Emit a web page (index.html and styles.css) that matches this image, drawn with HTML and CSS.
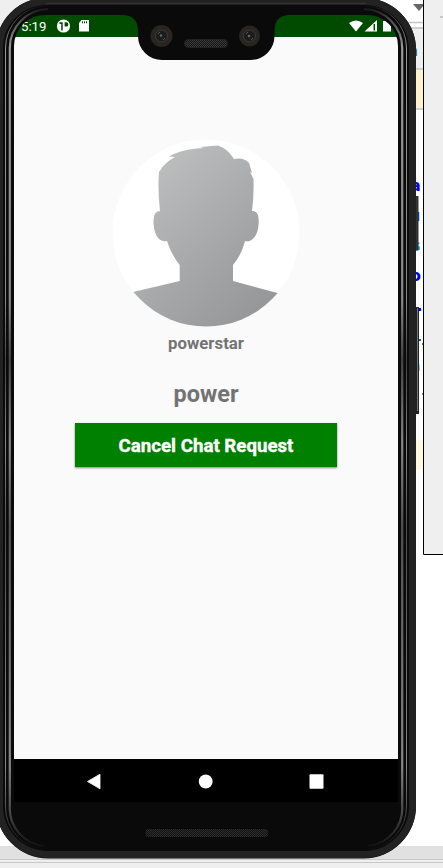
FILE: index.html
```
<!DOCTYPE html>
<html lang="en">
<head>
<meta charset="utf-8">
<title>Chat request</title>
<link rel="stylesheet" href="styles.css">
</head>
<body>
<svg class="desktop" viewBox="0 0 443 868" aria-hidden="true">
  <rect width="443" height="868" fill="#fff"/>
  <rect width="60" height="60" fill="#efefef"/>
  <rect x="350" y="27" width="74" height="42" fill="#efefef"/>
  <path d="M350 22.500h74M350 28h74M412 69h12M412 109h12" stroke="#c4c4c8" stroke-width="1.500"/>
  <path d="M413 4h12l-6 7z" fill="#666"/>
  <path d="M412 70h12v38h-12z" fill="#fff3cf"/>
  <path d="M412 440h12v30h-12z" fill="#fff8e1"/>
  <rect y="846" width="443" height="22" fill="#efefef"/>
  <rect y="846" width="443" height="13" fill="#e1e1e1"/>
  <path d="M0 859.500h443M0 862.500h443" stroke="#c8c8c8"/>
  <g class="code">
    <text x="406.500" y="56" fill="#0645ad">n</text>
    <text x="410" y="191">a</text><text x="409" y="221" fill="#0033dd">u</text>
    <text x="411" y="251" fill="#16a0c8">s</text><text x="410" y="281">o</text>
    <text x="405" y="311">d.</text><text x="409" y="371" fill="#0033ff">n</text>
  </g>
  <path d="M419 339h2v2h-2z" fill="#077"/><path d="M422 343h1v2h-1zM422 393h1v2h-1z" fill="#8a8a00"/>
  <path d="M423.500-1h30v555.500h-30z" fill="#efefef" stroke="#000"/>
  <path d="M440 17h3" stroke="#b5bcc4" stroke-width="1.500"/>
</svg>
<main class="screen">
  <header class="status">
    <span>5:19</span>
    <svg class="left-icons" width="36" height="16" viewBox="0 0 36 16"><circle cx="7.500" cy="8" r="6.600" fill="#fff"/><path d="M3.500 4.200h3.200v8.400H5.200V6H3.500zM8.600 4.200h1.500a2.200 2.200 0 0 1 0 4.400H8.600z" fill="#004b00"/><path d="M25.500 2h7.500v11.500H23V5z" fill="#fff"/><path d="M26.500 3.300v2M28.500 3.300v2M30.500 3.300v2" stroke="#004b00"/></svg>
    <svg class="right-icons" width="44" height="16" viewBox="0 0 44 16"><path d="M0 5Q7-.2 14 5L7 13.500z" fill="#fff"/><path d="M28 2v11.500H15.500z" fill="#fff"/><path d="M25.300 6v6.500" stroke="#004b00" stroke-width="1.500"/><path d="M34 3h2V2h4v1h2v10.500h-8z" fill="#fff"/></svg>
  </header>
  <section class="profile">
    <svg class="avatar" viewBox="0 0 188 188"><defs><linearGradient id="skin" x1="0" y1="0" x2="1" y2="1"><stop offset=".1" stop-color="#c1c1c1"/><stop offset=".55" stop-color="#a5a7a9"/><stop offset="1" stop-color="#8e8f91"/></linearGradient><clipPath id="disc"><circle cx="94" cy="94" r="93.500"/></clipPath></defs><circle cx="94" cy="94" r="93.500" fill="#fff"/><path clip-path="url(#disc)" fill="url(#skin)" d="M0 158L67.700 142V126Q59 115 55 102C45 104 41 92 41.500 81Q42 72 48 72Q45.500 51 47 33Q53 23 63 18L57 17.500Q68 11 85 9.500L92 9L88 8L106 6.500Q116 10 122 20Q132 18 137 24L140 34L138 33L141.500 40Q142 57 140 72C147 72 147 79 146.500 86C146 96 140 104 133 102Q130 115 121 126V142L188 160V188H0z"/></svg>
    <h1>powerstar</h1>
    <p>power</p>
    <button>Cancel Chat Request</button>
  </section>
  <nav>
    <svg viewBox="0 0 384 43"><path d="M73.500 22.500L86 15.200V29.800z" fill="#fff" stroke="#fff" stroke-linejoin="round" stroke-width=".8"/><circle cx="191.700" cy="22.500" r="6.900" fill="#fff"/><rect x="295.500" y="15.300" width="14" height="14.400" rx="1" fill="#fff"/></svg>
  </nav>
</main>
<svg class="frame" viewBox="0 0 443 868" aria-hidden="true">
  <defs>
    <pattern id="mesh" width="2" height="2" patternUnits="userSpaceOnUse"><rect width="2" height="2" fill="#151515"/><path d="M0 0h1v1H0zM1 1h1v1H1z" fill="#3c3c3c"/></pattern>
    <linearGradient id="edge" gradientUnits="userSpaceOnUse" x1="0" y1="5" x2="0" y2="850"><stop stop-color="#0a0a0a"/><stop offset=".015" stop-color="#444"/><stop offset=".05" stop-color="#999"/><stop offset=".35" stop-color="#888"/><stop offset=".42" stop-color="#444"/><stop offset=".52" stop-color="#888"/><stop offset=".62" stop-color="#505050"/><stop offset=".9" stop-color="#888"/><stop offset=".96" stop-color="#444"/><stop offset="1" stop-color="#0a0a0a"/></linearGradient>
  </defs>
  <path d="M414 196h4.500v54h-4.500z" fill="#333"/><path d="M414 307h5v107h-5z" fill="#222"/><path d="M417.500 308v103" stroke="#777"/>
  <path fill="#0a0a0a" fill-rule="evenodd" d="M46-2H364A52 52 0 0 1 416 50V806A52 52.500 0 0 1 364 858.500H48A52 52.500 0 0 1-4 806V48A50 50 0 0 1 46-2zM14 59V46A31 31 0 0 1 45 15H122Q138 15 138 31V36A24 24 0 0 0 162 60H250.500A24 24 0 0 0 274.500 36V31Q274.500 15 290 15H367A31 31 0 0 1 398 46V802H14z"/>
  <path d="M45 1.500H364A48.500 48.500 0 0 1 412.500 50V806A48.500 48.500 0 0 1 364 854.500H48A48.500 48.500 0 0 1-.5 806V48A46.500 46.500 0 0 1 45 1.500z" fill="none" stroke="#222" stroke-width="7"/>
  <path d="M46 3.300H366" stroke="#383838"/>
  <path d="M46 6A41 42 0 0 0 5.500 48V806A43 43 0 0 0 48 850M366 6A41 42 0 0 1 406.500 48V806A43 43 0 0 1 364 850" fill="none" stroke="url(#edge)"/>
  <path d="M48 9A39 39 0 0 0 9.800 48V806A38 38 0 0 0 44 846M364 9A39 39 0 0 1 402.200 48V806A38 38 0 0 1 368 846" fill="none" stroke="url(#edge)" stroke-width="2.200"/>
  <rect x="184.500" y="39.500" width="43" height="8" rx="4" fill="url(#mesh)" stroke="#222"/>
  <g fill="#2b2520"><circle cx="161.500" cy="36" r="11"/><circle cx="249.500" cy="36" r="10.500"/></g>
  <g fill="#1c1c1c" stroke="#3c3a38"><circle cx="161.500" cy="36" r="6"/><circle cx="249.500" cy="36" r="6"/></g>
  <g fill="none" stroke="#555"><path d="M158 34l2-2M163 40l2-2M246 34l2-2M251 40l2-2"/></g>
  <g fill="#666"><circle cx="161" cy="35.500" r="1.200"/><circle cx="249" cy="36" r="1.300"/></g>
  <rect x="145.500" y="829" width="122.500" height="8" rx="3" fill="url(#mesh)" opacity=".7"/>
</svg>
</body>
</html>
```
FILE: styles.css
```
body { margin: 0; width: 443px; height: 868px; overflow: hidden; font-family: Roboto, sans-serif; }
.desktop, .frame { position: absolute; left: 0; top: 0; width: 443px; height: 868px; }
.frame { pointer-events: none; }
.code { font: bold 16px "DejaVu Sans", sans-serif; fill: #0000e6; }
.screen { position: relative; display: flex; flex-direction: column; width: 384px; height: 787px; margin: 15px 0 0 14px; background: #fafafa; }
.status { display: flex; align-items: center; height: 22px; padding-left: 7px; background: #004b00; color: #fff; font-size: 13.2px; }
.left-icons { margin-left: 10px; overflow: visible; }
.right-icons { margin-left: auto; margin-right: 5px; }
.profile { flex: 1; display: flex; flex-direction: column; align-items: center; }
.avatar { width: 188px; height: 188px; margin-top: 102px; }
h1 { margin: 6px 0 0; font-size: 16.8px; line-height: 20px; color: #737373; font-weight: 700; }
p { margin: 26px 0 0; font-size: 23.5px; line-height: 30px; color: #737373; font-weight: 700; }
button { width: 262px; height: 44px; margin: 14px 0 0; padding: 1px 0 0; border: 0; background: #008000; color: #fff; font: bold 18.7px Roboto, sans-serif; white-space: nowrap; -webkit-text-stroke: .35px #fff; box-shadow: 0 1px 2px #0007; }
nav { height: 43px; background: #000; }
nav svg { display: block; width: 384px; height: 43px; }
```
